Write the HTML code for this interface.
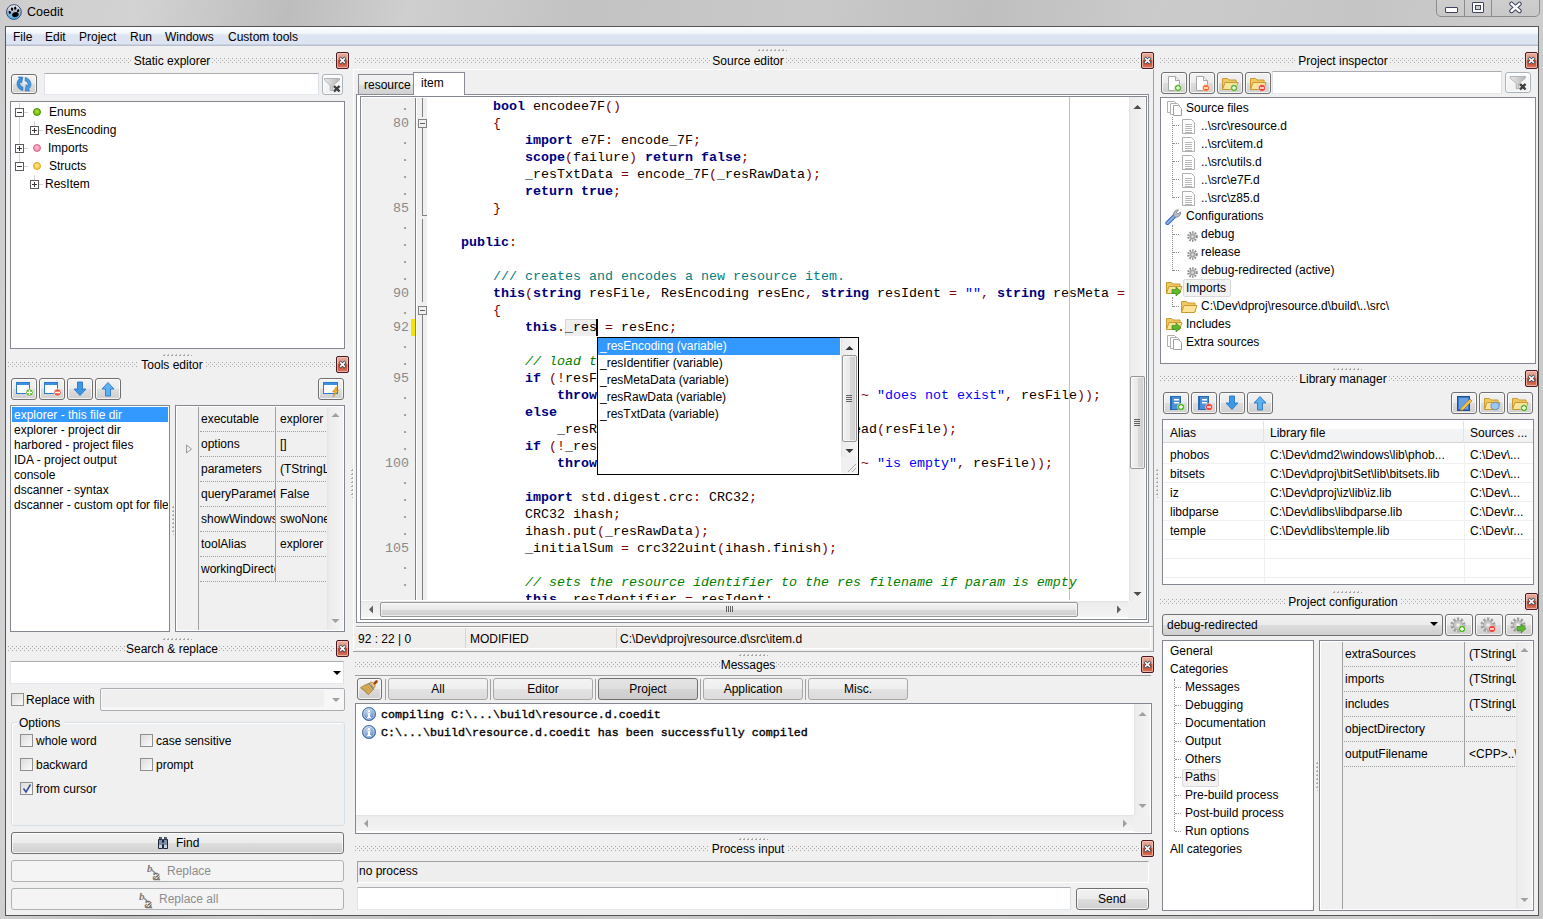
<!DOCTYPE html><html><head><meta charset="utf-8"><style>
*{box-sizing:content-box;margin:0;padding:0}
html,body{width:1543px;height:919px;overflow:hidden}
body{position:relative;background:#c9c9c9;font-family:"Liberation Sans",sans-serif;font-size:12px;color:#000}
div{position:absolute}
.t{white-space:pre;line-height:14px;font-size:12px}
.cb{width:11px;height:15px;border:1px solid #4a1820;border-radius:2px;background:linear-gradient(#e6a898 0,#e09a88 45%,#c8482e 46%,#cc5a40 75%,#d47c68 100%);box-shadow:inset 0 0 0 1px rgba(255,210,200,.6)}
.btn{border:1px solid #707070;border-radius:3px;background:linear-gradient(#f2f2f2 0,#ebebeb 50%,#dddddd 51%,#cfcfcf 100%);box-shadow:inset 0 0 0 1px rgba(255,255,255,.75)}
.dbtn{border:1px solid #adb2b5;border-radius:3px;background:#f4f4f4}
.edit{background:#fff;border:1px solid #abadb3;border-left-color:#e2e3ea;border-right-color:#dbdfe6;border-bottom-color:#e3e9ef}
.wbox{background:#fff;border:1px solid #828790}
.code{white-space:pre;font-family:"Liberation Mono",monospace;font-size:13.333px;line-height:17px}
.k{color:#000080;font-weight:bold}
.s{color:#800000}
.q{color:#0000ff}
.dc{color:#008080}
.cm{color:#008000;font-style:italic}
</style></head><body>
<svg width="0" height="0" style="position:absolute"><defs>
<pattern id="dotp" width="4" height="4" patternUnits="userSpaceOnUse"><rect x="0" y="0" width="1" height="1" fill="#a8a8a8"/><rect x="2" y="2" width="1" height="1" fill="#a8a8a8"/></pattern>
<pattern id="gripv" width="2" height="4" patternUnits="userSpaceOnUse"><rect x="1" y="0" width="1" height="1" fill="#b4b4b4"/><rect x="0" y="1" width="2" height="1" fill="#a8a8a8"/></pattern>
<pattern id="gripp" width="4" height="2" patternUnits="userSpaceOnUse"><rect x="1" y="0" width="1" height="1" fill="#b4b4b4"/><rect x="0" y="1" width="2" height="1" fill="#a8a8a8"/></pattern>
</defs></svg>

<div style="left:0px;top:0px;width:1543px;height:919px;background:linear-gradient(100deg,#cdcdcd 0,#d3d3d3 8%,#bdbdbd 17%,#cfcfcf 24%,#c3c3c3 34%,#c9c9c9 48%,#bfbfbf 58%,#cbcbcb 68%,#c5c5c5 80%,#cdcdcd 90%,#c6c6c6 100%)"></div>
<div style="left:0px;top:0px;width:1543px;height:919px;background:transparent;border:0"></div>
<svg style="position:absolute;left:5px;top:3px" width="18" height="18"><defs><linearGradient id="pawg" x1="0" y1="0" x2="0" y2="1"><stop offset="0" stop-color="#f4f4f8"/><stop offset=".5" stop-color="#a8b4c8"/><stop offset="1" stop-color="#3ab4f4"/></linearGradient></defs><circle cx="8.9" cy="9" r="7.4" fill="url(#pawg)" stroke="#34507a" stroke-width="1"/><ellipse cx="10.4" cy="11.6" rx="3.3" ry="2.4" transform="rotate(-15 10.4 11.6)" fill="#000"/><ellipse cx="4.8" cy="9.4" rx="1.1" ry="1.5" transform="rotate(-30 4.8 9.4)" fill="#000"/><ellipse cx="7.1" cy="6.1" rx="1.1" ry="1.6" transform="rotate(-15 7.1 6.1)" fill="#000"/><ellipse cx="10.2" cy="5.2" rx="1.1" ry="1.6" fill="#000"/><ellipse cx="13.1" cy="7.6" rx="1.1" ry="1.5" transform="rotate(30 13.1 7.6)" fill="#000"/></svg>
<div class="t" style="left:27px;top:5px;font-size:12.5px">Coedit</div>
<div style="left:1436px;top:-3px;width:102px;height:18px;border:1px solid #8c8c8c;border-radius:0 0 5px 5px;background:linear-gradient(#cfcfcf,#c8c8c8)"></div>
<div style="left:1464px;top:0px;width:1px;height:16px;background:#8c8c8c"></div>
<div style="left:1491px;top:0px;width:1px;height:16px;background:#8c8c8c"></div>
<div style="left:1445px;top:7px;width:11px;height:4px;border:1px solid #3c4460;border-radius:1px;background:#fff"></div>
<div style="left:1472px;top:2px;width:10px;height:9px;border:1px solid #3c4460;border-radius:1px;background:#fff"></div>
<div style="left:1475px;top:5px;width:4px;height:3px;border:1px solid #3c4460;background:#cfcfcf"></div>
<svg style="position:absolute;left:1508px;top:1px" width="15" height="13"><path d="M3.5 2.8 L11.5 10 M11.5 2.8 L3.5 10" stroke="#3c4460" stroke-width="4.4" stroke-linecap="round"/><path d="M3.5 2.8 L11.5 10 M11.5 2.8 L3.5 10" stroke="#fff" stroke-width="2.4" stroke-linecap="round"/></svg>
<div style="left:5px;top:26px;width:1532px;height:888px;border:1px solid #555;background:#f0f0f0"></div>
<div style="left:6px;top:27px;width:1532px;height:19px;background:linear-gradient(#fcfdfe 0,#f3f6fb 6px,#dde4f2 8px,#dce3f1 17px,#b8c0d0 18px,#b8c0d0 100%)"></div>
<div class="t" style="left:13px;top:30px;">File</div>
<div class="t" style="left:45px;top:30px;">Edit</div>
<div class="t" style="left:79px;top:30px;">Project</div>
<div class="t" style="left:130px;top:30px;">Run</div>
<div class="t" style="left:165px;top:30px;">Windows</div>
<div class="t" style="left:228px;top:30px;">Custom tools</div>
<svg style="position:absolute;left:8px;top:58px" width="124" height="5"><rect width="100%" height="5" fill="url(#dotp)"/></svg><svg style="position:absolute;left:212px;top:58px" width="123" height="5"><rect width="100%" height="5" fill="url(#dotp)"/></svg><div class="t" style="left:-28px;width:400px;text-align:center;top:54px;">Static explorer</div><div class="cb" style="left:336px;top:52px"><svg width="13" height="17" style="position:absolute;left:0;top:0"><path d="M2.6 4.6 L8.4 10.4 M8.4 4.6 L2.6 10.4" stroke="#3a4656" stroke-width="2.9" stroke-linecap="butt"/><path d="M3.1 5.1 L7.9 9.9 M7.9 5.1 L3.1 9.9" stroke="#fff" stroke-width="1.5" stroke-linecap="butt"/></svg></div>
<div class="btn" style="left:11px;top:74px;width:24px;height:18px;"><svg width="20" height="18" style="position:absolute;left:2px;top:0px"><g transform="translate(10 9) scale(1.15) translate(-10 -9)"><path d="M9 3 L5 3 L6.2 4.4 C3.6 6 3.2 10 5.4 12.6 C6.4 13.8 7.6 14.4 9 14.6 L9 11.6 C7 11.2 5.8 9 6.8 7 L8 8.3 L9 3Z" fill="#3d8fd8" stroke="#2a73b8" stroke-width=".6"/><path d="M11 15 L15 15 L13.8 13.6 C16.4 12 16.8 8 14.6 5.4 C13.6 4.2 12.4 3.6 11 3.4 L11 6.4 C13 6.8 14.2 9 13.2 11 L12 9.7 L11 15Z" fill="#4a9be0" stroke="#2a73b8" stroke-width=".6"/></g></svg></div>
<div class="edit" style="left:44px;top:73px;width:273px;height:20px;"></div>
<div class="btn" style="left:322px;top:74px;width:19px;height:19px;border-color:#aab2ba;background:linear-gradient(#fbfbfb,#f0f0f0)"><svg width="19" height="19" style="position:absolute;left:0;top:0"><defs><linearGradient id="fung" x1="0" x2="1"><stop offset="0" stop-color="#e8e8e8"/><stop offset="1" stop-color="#b8b8b8"/></linearGradient></defs><path d="M1.5 3.5 L16.5 3.5 L16.5 5 L9.8 10.5 L9.8 15.5 L7.2 15.5 L7.2 10.5 L1.5 5Z" fill="url(#fung)" stroke="#a8a8a8" stroke-width=".8"/><path d="M11 11 L16.5 16.5 M16.5 11 L11 16.5" stroke="#333" stroke-width="2.4"/><path d="M11 11 L16.5 16.5 M16.5 11 L11 16.5" stroke="#777" stroke-width=".6" stroke-dasharray="1 1"/></svg></div>
<div class="wbox" style="left:10px;top:101px;width:333px;height:246px;"></div>
<div style="left:19px;top:103px;width:1px;height:60px;background:#d4d4d4"></div>
<div style="left:24px;top:112px;width:4px;height:1px;background:#d4d4d4"></div>
<div style="left:15px;top:108px;width:7px;height:7px;border:1px solid #5c5c5c;background:#fff"><div style="left:1px;top:3px;width:5px;height:1px;background:#3c3c3c"></div></div>
<div style="left:33px;top:108px;width:6px;height:6px;border-radius:50%;border:1px solid #3a8a00;background:radial-gradient(circle at 50% 40%,#a8e040 0,#80c000 70%)"></div>
<div style="left:24px;top:148px;width:4px;height:1px;background:#d4d4d4"></div>
<div style="left:15px;top:144px;width:7px;height:7px;border:1px solid #5c5c5c;background:#fff"><div style="left:1px;top:3px;width:5px;height:1px;background:#3c3c3c"></div><div style="left:3px;top:1px;width:1px;height:5px;background:#3c3c3c"></div></div>
<div style="left:33px;top:144px;width:6px;height:6px;border-radius:50%;border:1px solid #d86088;background:radial-gradient(circle at 50% 40%,#ffc0d8 0,#f490b0 70%)"></div>
<div style="left:24px;top:166px;width:4px;height:1px;background:#d4d4d4"></div>
<div style="left:15px;top:162px;width:7px;height:7px;border:1px solid #5c5c5c;background:#fff"><div style="left:1px;top:3px;width:5px;height:1px;background:#3c3c3c"></div></div>
<div style="left:33px;top:162px;width:6px;height:6px;border-radius:50%;border:1px solid #e0a020;background:radial-gradient(circle at 50% 40%,#ffe890 0,#ffc840 70%)"></div>
<div style="left:34px;top:121px;width:1px;height:10px;background:#d4d4d4"></div>
<div style="left:34px;top:175px;width:1px;height:10px;background:#d4d4d4"></div>
<div style="left:30px;top:126px;width:7px;height:7px;border:1px solid #5c5c5c;background:#fff"><div style="left:1px;top:3px;width:5px;height:1px;background:#3c3c3c"></div><div style="left:3px;top:1px;width:1px;height:5px;background:#3c3c3c"></div></div>
<div style="left:39px;top:130px;width:4px;height:1px;background:#d4d4d4"></div>
<div style="left:30px;top:180px;width:7px;height:7px;border:1px solid #5c5c5c;background:#fff"><div style="left:1px;top:3px;width:5px;height:1px;background:#3c3c3c"></div><div style="left:3px;top:1px;width:1px;height:5px;background:#3c3c3c"></div></div>
<div style="left:39px;top:184px;width:4px;height:1px;background:#d4d4d4"></div>
<div class="t" style="left:49px;top:105px;">Enums</div>
<div class="t" style="left:45px;top:123px;">ResEncoding</div>
<div class="t" style="left:48px;top:141px;">Imports</div>
<div class="t" style="left:49px;top:159px;">Structs</div>
<div class="t" style="left:45px;top:177px;">ResItem</div>
<svg style="position:absolute;left:351px;top:469px" width="2" height="29"><rect width="2" height="100%" fill="url(#gripv)"/></svg>
<svg style="position:absolute;left:1156px;top:469px" width="2" height="29"><rect width="2" height="100%" fill="url(#gripv)"/></svg>
<svg style="position:absolute;left:172px;top:506px" width="2" height="29"><rect width="2" height="100%" fill="url(#gripv)"/></svg>
<svg style="position:absolute;left:1316px;top:762px" width="2" height="29"><rect width="2" height="100%" fill="url(#gripv)"/></svg>
<svg style="position:absolute;left:163px;top:354px" width="29" height="2"><rect width="100%" height="2" fill="url(#gripp)"/></svg>
<svg style="position:absolute;left:8px;top:362px" width="130" height="5"><rect width="100%" height="5" fill="url(#dotp)"/></svg><svg style="position:absolute;left:206px;top:362px" width="129" height="5"><rect width="100%" height="5" fill="url(#dotp)"/></svg><div class="t" style="left:-28px;width:400px;text-align:center;top:358px;">Tools editor</div><div class="cb" style="left:336px;top:356px"><svg width="13" height="17" style="position:absolute;left:0;top:0"><path d="M2.6 4.6 L8.4 10.4 M8.4 4.6 L2.6 10.4" stroke="#3a4656" stroke-width="2.9" stroke-linecap="butt"/><path d="M3.1 5.1 L7.9 9.9 M7.9 5.1 L3.1 9.9" stroke="#fff" stroke-width="1.5" stroke-linecap="butt"/></svg></div>
<div class="btn" style="left:11px;top:378px;width:24px;height:20px;"><svg width="22" height="20" style="position:absolute;left:1px;top:0"><rect x="3.5" y="3.5" width="13" height="11" fill="#fff" stroke="#2b7bd0"/><rect x="4" y="4" width="12" height="2" fill="#3d8fe0"/><circle cx="16.5" cy="13.5" r="3.6" fill="#4caf1c" stroke="#fff" stroke-width=".6"/><path d="M14 13.5 h5 M16.5 11 v5" stroke="#fff" stroke-width="1.5"/></svg></div>
<div class="btn" style="left:39px;top:378px;width:24px;height:20px;"><svg width="22" height="20" style="position:absolute;left:1px;top:0"><rect x="3.5" y="3.5" width="13" height="11" fill="#fff" stroke="#2b7bd0"/><rect x="4" y="4" width="12" height="2" fill="#3d8fe0"/><circle cx="16.5" cy="13.5" r="3.6" fill="#e8503a" stroke="#fff" stroke-width=".6"/><path d="M14 13.5 h5" stroke="#fff" stroke-width="1.6"/></svg></div>
<div class="btn" style="left:67px;top:378px;width:24px;height:20px;"><svg width="22" height="20" style="position:absolute;left:1px;top:0"><path d="M8.5 3 h5 v7 h3.5 L11 16.5 L5 10 h3.5Z" fill="#3a98e6" stroke="#1f6fc0" stroke-width=".8"/></svg></div>
<div class="btn" style="left:95px;top:378px;width:24px;height:20px;"><svg width="22" height="20" style="position:absolute;left:1px;top:0"><path d="M8.5 17 h5 v-7 h3.5 L11 3.5 L5 10 h3.5Z" fill="#5ab0f0" stroke="#1f6fc0" stroke-width=".8"/></svg></div>
<div class="btn" style="left:318px;top:378px;width:24px;height:20px;"><svg width="22" height="20" style="position:absolute;left:1px;top:0"><rect x="3.5" y="3.5" width="14" height="11" fill="#fff" stroke="#2b7bd0"/><rect x="4" y="4" width="13" height="2" fill="#3d8fe0"/><path d="M16 8 L12.5 13 L15 13 L13 18 L18.5 11.5 L16 11.5 L18 8Z" fill="#f0b428" stroke="#c07a10" stroke-width=".5"/></svg></div>
<div class="wbox" style="left:10px;top:405px;width:158px;height:225px;"></div>
<div style="left:12px;top:407px;width:156px;height:15px;background:#3399ff"></div>
<div style="left:11px;top:407px;width:157px;height:15px;overflow:hidden"><div class="t" style="left:3px;top:1px;color:#fff;">explorer - this file dir</div></div>
<div style="left:11px;top:407px;width:157px;height:30px;overflow:hidden"><div class="t" style="left:3px;top:16px;">explorer - project dir</div></div>
<div style="left:11px;top:407px;width:157px;height:45px;overflow:hidden"><div class="t" style="left:3px;top:31px;">harbored - project files</div></div>
<div style="left:11px;top:407px;width:157px;height:60px;overflow:hidden"><div class="t" style="left:3px;top:46px;">IDA - project output</div></div>
<div style="left:11px;top:407px;width:157px;height:75px;overflow:hidden"><div class="t" style="left:3px;top:61px;">console</div></div>
<div style="left:11px;top:407px;width:157px;height:90px;overflow:hidden"><div class="t" style="left:3px;top:76px;">dscanner - syntax</div></div>
<div style="left:11px;top:407px;width:157px;height:105px;overflow:hidden"><div class="t" style="left:3px;top:91px;">dscanner - custom opt for file</div></div>
<div style="left:175px;top:405px;width:168px;height:225px;background:#f0f0f0;border:1px solid #828790;box-shadow:inset 0 0 0 1px #fff"></div><div style="left:198px;top:407px;width:1px;height:223px;background:#a0a0a0"></div><div style="left:199px;top:407px;width:76px;height:25px;overflow:hidden"><div class="t" style="left:2px;top:5px">executable</div></div><div style="left:276px;top:407px;width:51px;height:25px;overflow:hidden"><div class="t" style="left:4px;top:5px">explorer</div></div><div style="left:200px;top:431px;width:126px;height:1px;border-top:1px dotted #a0a0a0;height:0"></div><div style="left:199px;top:432px;width:76px;height:25px;overflow:hidden"><div class="t" style="left:2px;top:5px">options</div></div><div style="left:276px;top:432px;width:51px;height:25px;overflow:hidden"><div class="t" style="left:4px;top:5px">[]</div></div><div style="left:200px;top:456px;width:126px;height:1px;border-top:1px dotted #a0a0a0;height:0"></div><div style="left:199px;top:457px;width:76px;height:25px;overflow:hidden"><div class="t" style="left:2px;top:5px">parameters</div></div><div style="left:276px;top:457px;width:51px;height:25px;overflow:hidden"><div class="t" style="left:4px;top:5px">(TStringList)</div></div><div style="left:200px;top:481px;width:126px;height:1px;border-top:1px dotted #a0a0a0;height:0"></div><div style="left:199px;top:482px;width:76px;height:25px;overflow:hidden"><div class="t" style="left:2px;top:5px">queryParameters</div></div><div style="left:276px;top:482px;width:51px;height:25px;overflow:hidden"><div class="t" style="left:4px;top:5px">False</div></div><div style="left:200px;top:506px;width:126px;height:1px;border-top:1px dotted #a0a0a0;height:0"></div><div style="left:199px;top:507px;width:76px;height:25px;overflow:hidden"><div class="t" style="left:2px;top:5px">showWindows</div></div><div style="left:276px;top:507px;width:51px;height:25px;overflow:hidden"><div class="t" style="left:4px;top:5px">swoNone</div></div><div style="left:200px;top:531px;width:126px;height:1px;border-top:1px dotted #a0a0a0;height:0"></div><div style="left:199px;top:532px;width:76px;height:25px;overflow:hidden"><div class="t" style="left:2px;top:5px">toolAlias</div></div><div style="left:276px;top:532px;width:51px;height:25px;overflow:hidden"><div class="t" style="left:4px;top:5px">explorer - this file dir</div></div><div style="left:200px;top:556px;width:126px;height:1px;border-top:1px dotted #a0a0a0;height:0"></div><div style="left:199px;top:557px;width:76px;height:25px;overflow:hidden"><div class="t" style="left:2px;top:5px">workingDirectory</div></div><div style="left:276px;top:557px;width:51px;height:25px;overflow:hidden"><div class="t" style="left:4px;top:5px"></div></div><div style="left:200px;top:581px;width:126px;height:1px;border-top:1px dotted #a0a0a0;height:0"></div><div style="left:275px;top:407px;width:1px;height:175px;background:#a0a0a0"></div><div style="left:327px;top:407px;width:16px;height:223px;background:linear-gradient(90deg,#e3e3e3 0,#ececec 2px,#f0f0f0 60%,#f4f4f4 100%)"></div><svg style="position:absolute;left:331px;top:412px" width="9" height="6"><path d="M0.5 5 L4.5 1 L8.5 5Z" fill="#a0a0a0"/></svg><svg style="position:absolute;left:331px;top:618px" width="9" height="6"><path d="M0.5 1 L4.5 5 L8.5 1Z" fill="#a0a0a0"/></svg><svg style="position:absolute;left:185px;top:444px" width="8" height="10"><path d="M1.5 1 L6.5 5 L1.5 9Z" fill="none" stroke="#9a9a9a"/></svg>
<svg style="position:absolute;left:163px;top:638px" width="29" height="2"><rect width="100%" height="2" fill="url(#gripp)"/></svg>
<svg style="position:absolute;left:8px;top:646px" width="117" height="5"><rect width="100%" height="5" fill="url(#dotp)"/></svg><svg style="position:absolute;left:219px;top:646px" width="116" height="5"><rect width="100%" height="5" fill="url(#dotp)"/></svg><div class="t" style="left:-28px;width:400px;text-align:center;top:642px;">Search &amp; replace</div><div class="cb" style="left:336px;top:640px"><svg width="13" height="17" style="position:absolute;left:0;top:0"><path d="M2.6 4.6 L8.4 10.4 M8.4 4.6 L2.6 10.4" stroke="#3a4656" stroke-width="2.9" stroke-linecap="butt"/><path d="M3.1 5.1 L7.9 9.9 M7.9 5.1 L3.1 9.9" stroke="#fff" stroke-width="1.5" stroke-linecap="butt"/></svg></div>
<div class="edit" style="left:10px;top:661px;width:332px;height:21px;"></div>
<svg style="position:absolute;left:333px;top:671px" width="9" height="5"><path d="M0 0 L8 0 L4 4Z" fill="#000"/></svg>
<div style="left:11px;top:693px;width:11px;height:11px;border:1px solid #8f8f8f;background:linear-gradient(135deg,#dcdcdc,#fafafa)"></div>
<div class="t" style="left:26px;top:693px;">Replace with</div>
<div style="left:100px;top:688px;width:243px;height:21px;background:#f7f7f7;border:1px solid #abadb3;border-radius:2px"></div>
<div style="left:102px;top:690px;width:222px;height:17px;background:#efefef"></div>
<svg style="position:absolute;left:332px;top:698px" width="9" height="5"><path d="M0 0 L8 0 L4 4Z" fill="#a0a0a0"/></svg>
<div style="left:11px;top:722px;width:332px;height:102px;border:1px solid #d5dfe5;border-radius:3px;box-shadow:inset 1px 1px 0 #fff"></div>
<div style="left:17px;top:718px;width:47px;height:12px;background:#f0f0f0"></div>
<div class="t" style="left:19px;top:716px;">Options</div>
<div style="left:20px;top:734px;width:11px;height:11px;border:1px solid #8f8f8f;background:linear-gradient(135deg,#dcdcdc,#fafafa)"></div>
<div class="t" style="left:36px;top:734px;">whole word</div>
<div style="left:140px;top:734px;width:11px;height:11px;border:1px solid #8f8f8f;background:linear-gradient(135deg,#dcdcdc,#fafafa)"></div>
<div class="t" style="left:156px;top:734px;">case sensitive</div>
<div style="left:20px;top:758px;width:11px;height:11px;border:1px solid #8f8f8f;background:linear-gradient(135deg,#dcdcdc,#fafafa)"></div>
<div class="t" style="left:36px;top:758px;">backward</div>
<div style="left:140px;top:758px;width:11px;height:11px;border:1px solid #8f8f8f;background:linear-gradient(135deg,#dcdcdc,#fafafa)"></div>
<div class="t" style="left:156px;top:758px;">prompt</div>
<div style="left:20px;top:782px;width:11px;height:11px;border:1px solid #8f8f8f;background:linear-gradient(135deg,#dcdcdc,#fafafa)"></div><svg style="position:absolute;left:22px;top:783px" width="10" height="11"><path d="M1.5 5.5 L4 9 L8.5 1.5" fill="none" stroke="#3850a0" stroke-width="1.6"/></svg>
<div class="t" style="left:36px;top:782px;">from cursor</div>
<div class="btn" style="left:11px;top:832px;width:331px;height:20px;"><svg width="16" height="16" style="position:absolute;left:144px;top:3px"><path d="M2.5 3.5 h4 v3 h1 v-3 h4 v9 h-4 v-4 h-1 v4 h-4Z" fill="#7d8ea8" stroke="#1e2838" stroke-width="1"/><rect x="3" y="9" width="3" height="3" fill="#c8d4e4"/><rect x="8" y="9" width="3" height="3" fill="#c8d4e4"/><rect x="3.5" y="1.5" width="2" height="2" fill="#5a6a88" stroke="#1e2838" stroke-width=".6"/><rect x="8.5" y="1.5" width="2" height="2" fill="#5a6a88" stroke="#1e2838" stroke-width=".6"/></svg></div>
<div class="t" style="left:176px;top:836px;">Find</div>
<div class="dbtn" style="left:11px;top:860px;width:331px;height:20px;"></div>
<div class="t" style="left:167px;top:864px;color:#8d8d8d">Replace</div>
<div class="dbtn" style="left:11px;top:888px;width:331px;height:20px;"></div>
<div class="t" style="left:159px;top:892px;color:#8d8d8d">Replace all</div>
<svg style="position:absolute;left:147px;top:863px" width="18" height="18"><text x="0" y="9" font-family="Liberation Serif" font-style="italic" font-weight="bold" font-size="11" fill="#7a7a7a">b</text><path d="M5 7 L9 11" stroke="#8a8a8a" stroke-width="1.4"/><text x="5.5" y="16.5" font-family="Liberation Serif" font-weight="bold" font-size="15" fill="#8a8a8a" stroke="#666" stroke-width=".5">a</text><path d="M7 15 L13 9 M9 16 L14 11" stroke="#f4f4f4" stroke-width=".6"/></svg>
<svg style="position:absolute;left:139px;top:891px" width="18" height="18"><text x="0" y="9" font-family="Liberation Serif" font-style="italic" font-weight="bold" font-size="11" fill="#7a7a7a">b</text><path d="M5 7 L9 11" stroke="#8a8a8a" stroke-width="1.4"/><text x="5.5" y="16.5" font-family="Liberation Serif" font-weight="bold" font-size="15" fill="#8a8a8a" stroke="#666" stroke-width=".5">a</text><path d="M7 15 L13 9 M9 16 L14 11" stroke="#f4f4f4" stroke-width=".6"/></svg>
<svg style="position:absolute;left:758px;top:49px" width="29" height="2"><rect width="100%" height="2" fill="url(#gripp)"/></svg>
<svg style="position:absolute;left:355px;top:58px" width="355" height="5"><rect width="100%" height="5" fill="url(#dotp)"/></svg><svg style="position:absolute;left:786px;top:58px" width="354" height="5"><rect width="100%" height="5" fill="url(#dotp)"/></svg><div class="t" style="left:548px;width:400px;text-align:center;top:54px;">Source editor</div><div class="cb" style="left:1141px;top:52px"><svg width="13" height="17" style="position:absolute;left:0;top:0"><path d="M2.6 4.6 L8.4 10.4 M8.4 4.6 L2.6 10.4" stroke="#3a4656" stroke-width="2.9" stroke-linecap="butt"/><path d="M3.1 5.1 L7.9 9.9 M7.9 5.1 L3.1 9.9" stroke="#fff" stroke-width="1.5" stroke-linecap="butt"/></svg></div>
<div style="left:353px;top:69px;width:800px;height:582px;border-left:1px solid #fff;border-top:1px solid #fff;border-right:1px solid #a0a0a0;border-bottom:1px solid #a0a0a0;width:799px;height:581px"></div>
<div style="left:358px;top:74px;width:55px;height:20px;border:1px solid #898c95;border-bottom:0;background:linear-gradient(#f2f2f2 0,#ebebeb 50%,#dddddd 51%,#cfcfcf 100%)"></div>
<div class="t" style="left:364px;top:78px;">resource</div>
<div style="left:413px;top:72px;width:50px;height:23px;border:1px solid #898c95;border-bottom:0;background:#fff"></div>
<div class="t" style="left:421px;top:76px;">item</div>
<div style="left:356px;top:94px;width:791px;height:527px;border:1px solid #898c95;background:#fff"></div>
<div style="left:414px;top:94px;width:50px;height:1px;background:#fff"></div>
<div style="left:360px;top:96px;width:785px;height:522px;border:1px solid #828790;background:#fff"></div>
<div style="left:362px;top:98px;width:53px;height:502px;background:#f0f0f0"></div>
<div style="left:415px;top:98px;width:1px;height:502px;background:#808080"></div>
<div style="left:417px;top:98px;width:10px;height:502px;background:#f0f0f0"></div>
<div style="left:1069px;top:97px;width:1px;height:503px;background:#c0c0c0"></div>
<div style="left:361px;top:98px;width:768px;height:502px;overflow:hidden"><div class="code" style="left:68px;top:0px;height:17px">        <span class="k">bool</span> encodee7F<span class="s">(</span><span class="s">)</span></div><div class="code" style="left:0px;top:0px;width:48px;text-align:right;color:#8a8a8a">.</div><div class="code" style="left:68px;top:17px;height:17px">        <span class="s">{</span></div><div class="code" style="left:0px;top:17px;width:48px;text-align:right;color:#8a8a8a">80</div><div class="code" style="left:68px;top:34px;height:17px">            <span class="k">import</span> e7F<span class="s">:</span> encode_7F<span class="s">;</span></div><div class="code" style="left:0px;top:34px;width:48px;text-align:right;color:#8a8a8a">.</div><div class="code" style="left:68px;top:51px;height:17px">            <span class="k">scope</span><span class="s">(</span>failure<span class="s">)</span> <span class="k">return</span> <span class="k">false</span><span class="s">;</span></div><div class="code" style="left:0px;top:51px;width:48px;text-align:right;color:#8a8a8a">.</div><div class="code" style="left:68px;top:68px;height:17px">            _resTxtData <span class="s">=</span> encode_7F<span class="s">(</span>_resRawData<span class="s">)</span><span class="s">;</span></div><div class="code" style="left:0px;top:68px;width:48px;text-align:right;color:#8a8a8a">.</div><div class="code" style="left:68px;top:85px;height:17px">            <span class="k">return</span> <span class="k">true</span><span class="s">;</span></div><div class="code" style="left:0px;top:85px;width:48px;text-align:right;color:#8a8a8a">.</div><div class="code" style="left:68px;top:102px;height:17px">        <span class="s">}</span></div><div class="code" style="left:0px;top:102px;width:48px;text-align:right;color:#8a8a8a">85</div><div class="code" style="left:68px;top:119px;height:17px"></div><div class="code" style="left:0px;top:119px;width:48px;text-align:right;color:#8a8a8a">.</div><div class="code" style="left:68px;top:136px;height:17px">    <span class="k">public</span><span class="s">:</span></div><div class="code" style="left:0px;top:136px;width:48px;text-align:right;color:#8a8a8a">.</div><div class="code" style="left:68px;top:153px;height:17px"></div><div class="code" style="left:0px;top:153px;width:48px;text-align:right;color:#8a8a8a">.</div><div class="code" style="left:68px;top:170px;height:17px">        <span class="dc">/// creates and encodes a new resource item.</span></div><div class="code" style="left:0px;top:170px;width:48px;text-align:right;color:#8a8a8a">.</div><div class="code" style="left:68px;top:187px;height:17px">        <span class="k">this</span><span class="s">(</span><span class="k">string</span> resFile<span class="s">,</span> ResEncoding resEnc<span class="s">,</span> <span class="k">string</span> resIdent <span class="s">=</span> <span class="q">&quot;&quot;</span><span class="s">,</span> <span class="k">string</span> resMeta <span class="s">=</span></div><div class="code" style="left:0px;top:187px;width:48px;text-align:right;color:#8a8a8a">90</div><div class="code" style="left:68px;top:204px;height:17px">        <span class="s">{</span></div><div class="code" style="left:0px;top:204px;width:48px;text-align:right;color:#8a8a8a">.</div><div class="code" style="left:68px;top:221px;height:17px">            <span class="k">this</span><span class="s">.</span>_res <span class="s">=</span> resEnc<span class="s">;</span></div><div class="code" style="left:0px;top:221px;width:48px;text-align:right;color:#8a8a8a">92</div><div class="code" style="left:68px;top:238px;height:17px"></div><div class="code" style="left:0px;top:238px;width:48px;text-align:right;color:#8a8a8a">.</div><div class="code" style="left:68px;top:255px;height:17px">            <span class="cm">// load the resource file</span></div><div class="code" style="left:0px;top:255px;width:48px;text-align:right;color:#8a8a8a">.</div><div class="code" style="left:68px;top:272px;height:17px">            <span class="k">if</span> <span class="s">(</span><span class="s">!</span>resFile<span class="s">.</span>exists<span class="s">)</span></div><div class="code" style="left:0px;top:272px;width:48px;text-align:right;color:#8a8a8a">95</div><div class="code" style="left:68px;top:289px;height:17px">                <span class="k">throw</span> <span class="k">new</span> Exception<span class="s">(</span>                  <span class="s">~</span> <span class="q">&quot;does not exist&quot;</span><span class="s">,</span> resFile<span class="s">)</span><span class="s">)</span><span class="s">;</span></div><div class="code" style="left:0px;top:289px;width:48px;text-align:right;color:#8a8a8a">.</div><div class="code" style="left:68px;top:306px;height:17px">            <span class="k">else</span></div><div class="code" style="left:0px;top:306px;width:48px;text-align:right;color:#8a8a8a">.</div><div class="code" style="left:68px;top:323px;height:17px">                _resRawData <span class="s">=</span> cast<span class="s">(</span>ubyte<span class="s">[</span><span class="s">]</span><span class="s">)</span>r        read<span class="s">(</span>resFile<span class="s">)</span><span class="s">;</span></div><div class="code" style="left:0px;top:323px;width:48px;text-align:right;color:#8a8a8a">.</div><div class="code" style="left:68px;top:340px;height:17px">            <span class="k">if</span> <span class="s">(</span><span class="s">!</span>_resRawData<span class="s">.</span>length<span class="s">)</span></div><div class="code" style="left:0px;top:340px;width:48px;text-align:right;color:#8a8a8a">.</div><div class="code" style="left:68px;top:357px;height:17px">                <span class="k">throw</span> <span class="k">new</span> Exception<span class="s">(</span>                  <span class="s">~</span> <span class="q">&quot;is empty&quot;</span><span class="s">,</span> resFile<span class="s">)</span><span class="s">)</span><span class="s">;</span></div><div class="code" style="left:0px;top:357px;width:48px;text-align:right;color:#8a8a8a">100</div><div class="code" style="left:68px;top:374px;height:17px"></div><div class="code" style="left:0px;top:374px;width:48px;text-align:right;color:#8a8a8a">.</div><div class="code" style="left:68px;top:391px;height:17px">            <span class="k">import</span> std<span class="s">.</span>digest<span class="s">.</span>crc<span class="s">:</span> CRC32<span class="s">;</span></div><div class="code" style="left:0px;top:391px;width:48px;text-align:right;color:#8a8a8a">.</div><div class="code" style="left:68px;top:408px;height:17px">            CRC32 ihash<span class="s">;</span></div><div class="code" style="left:0px;top:408px;width:48px;text-align:right;color:#8a8a8a">.</div><div class="code" style="left:68px;top:425px;height:17px">            ihash<span class="s">.</span>put<span class="s">(</span>_resRawData<span class="s">)</span><span class="s">;</span></div><div class="code" style="left:0px;top:425px;width:48px;text-align:right;color:#8a8a8a">.</div><div class="code" style="left:68px;top:442px;height:17px">            _initialSum <span class="s">=</span> crc322uint<span class="s">(</span>ihash<span class="s">.</span>finish<span class="s">)</span><span class="s">;</span></div><div class="code" style="left:0px;top:442px;width:48px;text-align:right;color:#8a8a8a">105</div><div class="code" style="left:68px;top:459px;height:17px"></div><div class="code" style="left:0px;top:459px;width:48px;text-align:right;color:#8a8a8a">.</div><div class="code" style="left:68px;top:476px;height:17px">            <span class="cm">// sets the resource identifier to the res filename if param is empty</span></div><div class="code" style="left:0px;top:476px;width:48px;text-align:right;color:#8a8a8a">.</div><div class="code" style="left:68px;top:493px;height:17px">            <span class="k">this</span><span class="s">.</span>_resIdentifier <span class="s">=</span> resIdent<span class="s">;</span></div><div class="code" style="left:0px;top:493px;width:48px;text-align:right;color:#8a8a8a">.</div></div>
<div style="left:422px;top:98px;width:1px;height:19px;background:#808080"></div>
<div style="left:418px;top:119px;width:7px;height:7px;border:1px solid #808080;background:#f0f0f0"></div><div style="left:420px;top:123px;width:5px;height:1px;background:#606060"></div>
<div style="left:422px;top:128px;width:1px;height:88px;background:#808080"></div>
<div style="left:422px;top:215px;width:5px;height:1px;background:#808080"></div>
<div style="left:422px;top:219px;width:1px;height:83px;background:#808080"></div>
<div style="left:418px;top:306px;width:7px;height:7px;border:1px solid #808080;background:#f0f0f0"></div><div style="left:420px;top:310px;width:5px;height:1px;background:#606060"></div>
<div style="left:422px;top:315px;width:1px;height:285px;background:#808080"></div>
<div style="left:411px;top:319px;width:4px;height:17px;background:#f5e600"></div>
<div style="left:565px;top:319px;width:31px;height:16px;background:#eeeeee;border:1px solid #d8d8d8;border-bottom:0;width:30px"></div>
<div class="code" style="left:565px;top:319px;height:17px"><span style="color:#000">_res</span></div>
<div style="left:596px;top:319px;width:2px;height:17px;background:#000"></div>
<div style="left:1129px;top:97px;width:16px;height:506px;background:linear-gradient(90deg,#e3e3e3 0,#ededed 2px,#f0f0f0 60%,#f4f4f4 100%)"></div><svg style="position:absolute;left:1133px;top:104px" width="9" height="6"><path d="M0.5 5 L4.5 1 L8.5 5Z" fill="#4a4a4a"/></svg><svg style="position:absolute;left:1133px;top:591px" width="9" height="6"><path d="M0.5 1 L4.5 5 L8.5 1Z" fill="#4a4a4a"/></svg><div style="left:1130px;top:376px;width:13px;height:91px;border:1px solid #979797;border-radius:2px;background:linear-gradient(90deg,#f4f4f4 0,#e8e8e8 50%,#d9d9d9 51%,#cfcfcf 100%);box-shadow:inset 0 0 0 1px rgba(255,255,255,.6)"></div><div style="left:1134px;top:419px;width:6px;height:1px;background:#606060"></div><div style="left:1134px;top:421px;width:6px;height:1px;background:#606060"></div><div style="left:1134px;top:423px;width:6px;height:1px;background:#606060"></div><div style="left:1134px;top:425px;width:6px;height:1px;background:#606060"></div>
<div style="left:361px;top:601px;width:767px;height:16px;background:linear-gradient(#e3e3e3 0,#ededed 2px,#f0f0f0 60%,#f4f4f4 100%)"></div><svg style="position:absolute;left:368px;top:605px" width="6" height="9"><path d="M5 0.5 L1 4.5 L5 8.5Z" fill="#606060"/></svg><svg style="position:absolute;left:1116px;top:605px" width="6" height="9"><path d="M1 0.5 L5 4.5 L1 8.5Z" fill="#606060"/></svg><div style="left:380px;top:602px;width:696px;height:13px;border:1px solid #979797;border-radius:2px;background:linear-gradient(#f4f4f4 0,#e8e8e8 50%,#d9d9d9 51%,#cfcfcf 100%);box-shadow:inset 0 0 0 1px rgba(255,255,255,.6)"></div><div style="left:726px;top:606px;width:1px;height:6px;background:#606060"></div><div style="left:728px;top:606px;width:1px;height:6px;background:#606060"></div><div style="left:730px;top:606px;width:1px;height:6px;background:#606060"></div><div style="left:732px;top:606px;width:1px;height:6px;background:#606060"></div>
<div style="left:1128px;top:601px;width:17px;height:17px;background:#f0f0f0"></div>
<div style="left:597px;top:337px;width:260px;height:136px;border:1px solid #000;background:#fff"></div>
<div style="left:598px;top:338px;width:242px;height:17px;background:#3399ff"></div>
<div class="t" style="left:600px;top:339px;color:#fff">_resEncoding (variable)</div>
<div class="t" style="left:600px;top:356px;">_resIdentifier (variable)</div>
<div class="t" style="left:600px;top:373px;">_resMetaData (variable)</div>
<div class="t" style="left:600px;top:390px;">_resRawData (variable)</div>
<div class="t" style="left:600px;top:407px;">_resTxtData (variable)</div>
<div style="left:841px;top:338px;width:16px;height:122px;background:linear-gradient(90deg,#e3e3e3 0,#ededed 2px,#f0f0f0 60%,#f4f4f4 100%)"></div><svg style="position:absolute;left:845px;top:345px" width="9" height="6"><path d="M0.5 5 L4.5 1 L8.5 5Z" fill="#333"/></svg><svg style="position:absolute;left:845px;top:448px" width="9" height="6"><path d="M0.5 1 L4.5 5 L8.5 1Z" fill="#333"/></svg><div style="left:842px;top:355px;width:13px;height:85px;border:1px solid #979797;border-radius:2px;background:linear-gradient(90deg,#f4f4f4 0,#e8e8e8 50%,#d9d9d9 51%,#cfcfcf 100%);box-shadow:inset 0 0 0 1px rgba(255,255,255,.6)"></div><div style="left:846px;top:395px;width:6px;height:1px;background:#606060"></div><div style="left:846px;top:397px;width:6px;height:1px;background:#606060"></div><div style="left:846px;top:399px;width:6px;height:1px;background:#606060"></div><div style="left:846px;top:401px;width:6px;height:1px;background:#606060"></div>
<div style="left:841px;top:457px;width:16px;height:16px;background:#f0f0f0"></div>
<svg style="position:absolute;left:846px;top:462px" width="11" height="11"><path d="M10 2 L2 10 M10 6 L6 10" stroke="#aaa" stroke-width="1"/></svg>
<div style="left:356px;top:626px;width:797px;height:1px;background:#a0a0a0"></div>
<div style="left:356px;top:627px;width:794px;height:20px;background:#f0eded;border:1px solid #fff;border-left:0"></div>
<div style="left:465px;top:628px;width:1px;height:20px;background:#d8d4d4"></div>
<div style="left:616px;top:628px;width:1px;height:20px;background:#d8d4d4"></div>
<div class="t" style="left:358px;top:632px;">92 : 22 | 0</div>
<div class="t" style="left:470px;top:632px;">MODIFIED</div>
<div class="t" style="left:620px;top:632px;">C:\Dev\dproj\resource.d\src\item.d</div>
<div style="left:353px;top:651px;width:800px;height:1px;background:#a0a0a0"></div>
<svg style="position:absolute;left:739px;top:654px" width="29" height="2"><rect width="100%" height="2" fill="url(#gripp)"/></svg>
<svg style="position:absolute;left:355px;top:662px" width="365" height="5"><rect width="100%" height="5" fill="url(#dotp)"/></svg><svg style="position:absolute;left:776px;top:662px" width="364" height="5"><rect width="100%" height="5" fill="url(#dotp)"/></svg><div class="t" style="left:548px;width:400px;text-align:center;top:658px;">Messages</div><div class="cb" style="left:1141px;top:656px"><svg width="13" height="17" style="position:absolute;left:0;top:0"><path d="M2.6 4.6 L8.4 10.4 M8.4 4.6 L2.6 10.4" stroke="#3a4656" stroke-width="2.9" stroke-linecap="butt"/><path d="M3.1 5.1 L7.9 9.9 M7.9 5.1 L3.1 9.9" stroke="#fff" stroke-width="1.5" stroke-linecap="butt"/></svg></div>
<div style="left:355px;top:675px;width:796px;height:1px;background:#a0a0a0"></div>
<div class="btn" style="left:357px;top:678px;width:23px;height:20px;"><svg width="22" height="20" style="position:absolute;left:1px;top:0"><path d="M14.5 5.5 L17.5 2.5" stroke="#9a4a1a" stroke-width="2.6" stroke-linecap="round"/><path d="M1.5 8.8 C4 7 7 5.5 9.8 4.6 L14.6 10 C13 12 11 14 9 15.6 C7 13 4 10.5 1.5 8.8Z" fill="#d9b15a" stroke="#8a6020" stroke-width=".7"/><path d="M3.5 9 L9 13.5 M5.5 7.8 L10.5 12.2 M7.5 6.5 L12 10.8" stroke="#b08030" stroke-width=".6"/><path d="M10 4.5 L14.5 9.8" stroke="#8088a0" stroke-width="2.2" stroke-dasharray="1.2 .8"/><path d="M10.6 3.8 C11.6 3 12.8 2.8 13.6 3.6 L16 6.2 C16.4 7.4 15.8 8.6 15 9.2Z" fill="#e8c878" stroke="#9a7030" stroke-width=".6"/></svg></div>
<div style="left:385px;top:679px;width:1px;height:21px;background:#a0a0a0"></div>
<div style="left:388px;top:678px;width:98px;height:20px;border:1px solid #a8a8a8;border-radius:3px;background:linear-gradient(#f4f4f4 0,#eeeeee 50%,#e2e2e2 51%,#dcdcdc 100%)"></div><div class="t" style="left:238px;width:400px;text-align:center;top:682px;">All</div>
<div style="left:493px;top:678px;width:98px;height:20px;border:1px solid #a8a8a8;border-radius:3px;background:linear-gradient(#f4f4f4 0,#eeeeee 50%,#e2e2e2 51%,#dcdcdc 100%)"></div><div class="t" style="left:343px;width:400px;text-align:center;top:682px;">Editor</div>
<div style="left:490px;top:679px;width:1px;height:21px;background:#a0a0a0"></div>
<div style="left:598px;top:678px;width:98px;height:20px;border:1px solid #707070;border-radius:3px;background:linear-gradient(#e4e4e4 0,#dedede 50%,#d4d4d4 51%,#cccccc 100%)"></div><div class="t" style="left:448px;width:400px;text-align:center;top:682px;">Project</div>
<div style="left:595px;top:679px;width:1px;height:21px;background:#a0a0a0"></div>
<div style="left:703px;top:678px;width:98px;height:20px;border:1px solid #a8a8a8;border-radius:3px;background:linear-gradient(#f4f4f4 0,#eeeeee 50%,#e2e2e2 51%,#dcdcdc 100%)"></div><div class="t" style="left:553px;width:400px;text-align:center;top:682px;">Application</div>
<div style="left:700px;top:679px;width:1px;height:21px;background:#a0a0a0"></div>
<div style="left:808px;top:678px;width:98px;height:20px;border:1px solid #a8a8a8;border-radius:3px;background:linear-gradient(#f4f4f4 0,#eeeeee 50%,#e2e2e2 51%,#dcdcdc 100%)"></div><div class="t" style="left:658px;width:400px;text-align:center;top:682px;">Misc.</div>
<div style="left:805px;top:679px;width:1px;height:21px;background:#a0a0a0"></div>
<div style="left:355px;top:703px;width:795px;height:129px;border:1px solid #828790;background:#fff"></div>
<svg style="position:absolute;left:362px;top:707px" width="15" height="15"><defs><radialGradient id="ig362707" cx="45%" cy="35%" r="65%"><stop offset="0" stop-color="#cfe0f4"/><stop offset="1" stop-color="#4a78b8"/></radialGradient></defs><circle cx="7" cy="7" r="6.6" fill="url(#ig362707)" stroke="#3a5f98" stroke-width=".8"/><circle cx="7" cy="7" r="5.2" fill="none" stroke="#e8f0fa" stroke-width=".7" opacity=".8"/><rect x="6" y="6" width="2" height="4.5" fill="#fff"/><rect x="5" y="10" width="4" height="1.2" fill="#fff"/><rect x="6" y="3.2" width="2" height="1.8" fill="#fff"/></svg>
<svg style="position:absolute;left:362px;top:725px" width="15" height="15"><defs><radialGradient id="ig362725" cx="45%" cy="35%" r="65%"><stop offset="0" stop-color="#cfe0f4"/><stop offset="1" stop-color="#4a78b8"/></radialGradient></defs><circle cx="7" cy="7" r="6.6" fill="url(#ig362725)" stroke="#3a5f98" stroke-width=".8"/><circle cx="7" cy="7" r="5.2" fill="none" stroke="#e8f0fa" stroke-width=".7" opacity=".8"/><rect x="6" y="6" width="2" height="4.5" fill="#fff"/><rect x="5" y="10" width="4" height="1.2" fill="#fff"/><rect x="6" y="3.2" width="2" height="1.8" fill="#fff"/></svg>
<div class="code" style="left:381px;top:706px;font-size:11.667px;line-height:18px;-webkit-text-stroke:0.35px #000">compiling C:\...\build\resource.d.coedit</div>
<div class="code" style="left:381px;top:724px;font-size:11.667px;line-height:18px;-webkit-text-stroke:0.35px #000">C:\...\build\resource.d.coedit has been successfully compiled</div>
<div style="left:1134px;top:704px;width:16px;height:111px;background:linear-gradient(90deg,#e3e3e3 0,#ededed 2px,#f0f0f0 60%,#f4f4f4 100%)"></div><svg style="position:absolute;left:1138px;top:711px" width="9" height="6"><path d="M0.5 5 L4.5 1 L8.5 5Z" fill="#a0a0a0"/></svg><svg style="position:absolute;left:1138px;top:803px" width="9" height="6"><path d="M0.5 1 L4.5 5 L8.5 1Z" fill="#a0a0a0"/></svg>
<div style="left:356px;top:815px;width:778px;height:16px;background:linear-gradient(#e3e3e3 0,#ededed 2px,#f0f0f0 60%,#f4f4f4 100%)"></div><svg style="position:absolute;left:363px;top:819px" width="6" height="9"><path d="M5 0.5 L1 4.5 L5 8.5Z" fill="#a0a0a0"/></svg><svg style="position:absolute;left:1122px;top:819px" width="6" height="9"><path d="M1 0.5 L5 4.5 L1 8.5Z" fill="#a0a0a0"/></svg>
<div style="left:1134px;top:815px;width:16px;height:17px;background:#f0f0f0"></div>
<svg style="position:absolute;left:739px;top:838px" width="29" height="2"><rect width="100%" height="2" fill="url(#gripp)"/></svg>
<svg style="position:absolute;left:355px;top:846px" width="353" height="5"><rect width="100%" height="5" fill="url(#dotp)"/></svg><svg style="position:absolute;left:788px;top:846px" width="352" height="5"><rect width="100%" height="5" fill="url(#dotp)"/></svg><div class="t" style="left:548px;width:400px;text-align:center;top:842px;">Process input</div><div class="cb" style="left:1141px;top:840px"><svg width="13" height="17" style="position:absolute;left:0;top:0"><path d="M2.6 4.6 L8.4 10.4 M8.4 4.6 L2.6 10.4" stroke="#3a4656" stroke-width="2.9" stroke-linecap="butt"/><path d="M3.1 5.1 L7.9 9.9 M7.9 5.1 L3.1 9.9" stroke="#fff" stroke-width="1.5" stroke-linecap="butt"/></svg></div>
<div style="left:357px;top:861px;width:791px;height:20px;background:#eeeeee;border-top:1px solid #a0a0a0;border-left:1px solid #a0a0a0;border-bottom:1px solid #fff;border-right:1px solid #fff;width:790px"></div>
<div class="t" style="left:359px;top:864px;">no process</div>
<div class="edit" style="left:357px;top:887px;width:712px;height:21px;"></div>
<div class="btn" style="left:1076px;top:888px;width:71px;height:20px;"></div>
<div class="t" style="left:912px;width:400px;text-align:center;top:892px;">Send</div>
<svg style="position:absolute;left:1160px;top:58px" width="136" height="5"><rect width="100%" height="5" fill="url(#dotp)"/></svg><svg style="position:absolute;left:1390px;top:58px" width="134" height="5"><rect width="100%" height="5" fill="url(#dotp)"/></svg><div class="t" style="left:1143px;width:400px;text-align:center;top:54px;">Project inspector</div><div class="cb" style="left:1525px;top:52px"><svg width="13" height="17" style="position:absolute;left:0;top:0"><path d="M2.6 4.6 L8.4 10.4 M8.4 4.6 L2.6 10.4" stroke="#3a4656" stroke-width="2.9" stroke-linecap="butt"/><path d="M3.1 5.1 L7.9 9.9 M7.9 5.1 L3.1 9.9" stroke="#fff" stroke-width="1.5" stroke-linecap="butt"/></svg></div>
<div class="btn" style="left:1161px;top:72px;width:24px;height:20px;"><svg style="position:absolute;left:4px;top:2px" width="17" height="17"><path d="M2.5 1.5 h7 l4 4 v10 h-11Z" fill="#fff" stroke="#a8a8a8"/><path d="M9.5 1.5 v4 h4" fill="#eee" stroke="#a8a8a8"/><circle cx="12" cy="13" r="3.5" fill="#4caf1c" stroke="#fff" stroke-width=".5"/><path d="M10 13 h4 M12 11 v4" stroke="#fff" stroke-width="1.3"/></svg></div>
<div class="btn" style="left:1189px;top:72px;width:24px;height:20px;"><svg style="position:absolute;left:4px;top:2px" width="17" height="17"><path d="M2.5 1.5 h7 l4 4 v10 h-11Z" fill="#fff" stroke="#a8a8a8"/><path d="M9.5 1.5 v4 h4" fill="#eee" stroke="#a8a8a8"/><circle cx="12" cy="13" r="3.5" fill="#f06a2a" stroke="#fff" stroke-width=".5"/><path d="M10 13 h4" stroke="#fff" stroke-width="1.4"/></svg></div>
<div class="btn" style="left:1217px;top:72px;width:24px;height:20px;"><svg style="position:absolute;left:3px;top:2px" width="18" height="17"><path d="M1.5 3.5 h5 l1.5 1.5 h7 v9 h-13.5Z" fill="#f0c860" stroke="#c89a30"/><path d="M1.5 14.5 l2.5 -7 h13 l-2.5 7Z" fill="#fbe39a" stroke="#c89a30"/><circle cx="13" cy="13" r="3.5" fill="#4caf1c" stroke="#fff" stroke-width=".5"/><path d="M11 13 h4 M13 11 v4" stroke="#fff" stroke-width="1.3"/></svg></div>
<div class="btn" style="left:1245px;top:72px;width:24px;height:20px;"><svg style="position:absolute;left:3px;top:2px" width="18" height="17"><path d="M1.5 3.5 h5 l1.5 1.5 h7 v9 h-13.5Z" fill="#f0c860" stroke="#c89a30"/><path d="M1.5 14.5 l2.5 -7 h13 l-2.5 7Z" fill="#fbe39a" stroke="#c89a30"/><circle cx="13" cy="13" r="3.5" fill="#e8443a" stroke="#fff" stroke-width=".5"/><path d="M11 13 h4" stroke="#fff" stroke-width="1.4"/></svg></div>
<div class="edit" style="left:1272px;top:71px;width:228px;height:21px;"></div>
<div class="btn" style="left:1505px;top:72px;width:24px;height:19px;border-color:#aab2ba;background:linear-gradient(#fbfbfb,#f0f0f0)"><svg width="24" height="19" style="position:absolute;left:0;top:0"><path d="M4 3.5 L19.5 3.5 L19.5 5 L12.8 10.5 L12.8 15.5 L10.2 15.5 L10.2 10.5 L4 5Z" fill="url(#fung)" stroke="#a8a8a8" stroke-width=".8"/><path d="M14 11 L19.5 16.5 M19.5 11 L14 16.5" stroke="#333" stroke-width="2.4"/><path d="M14 11 L19.5 16.5 M19.5 11 L14 16.5" stroke="#777" stroke-width=".6" stroke-dasharray="1 1"/></svg></div>
<div class="wbox" style="left:1160px;top:97px;width:374px;height:265px;"></div>
<svg style="position:absolute;left:1166px;top:100px" width="17" height="17"><path d="M1.5 1.5 h7 l2 2 v9 h-9Z" fill="#fff" stroke="#b0b0b0"/><path d="M4.5 3.5 h7 l2 2 v9 h-9Z" fill="#fff" stroke="#b0b0b0"/><path d="M7.5 5.5 h5 l3 3 v7 h-8Z" fill="#fff" stroke="#a0a0a0"/></svg>
<div class="t" style="left:1186px;top:101px;">Source files</div>
<div style="left:1172px;top:117px;width:0;height:81px;border-left:1px dotted #909090"></div>
<div style="left:1173px;top:125px;width:6px;height:0;border-top:1px dotted #909090"></div>
<svg style="position:absolute;left:1181px;top:118px" width="16" height="17"><path d="M1.5 1.5 h9 l3 3 v11 h-12Z" fill="#fff" stroke="#b0b0b0"/><path d="M4 6.5 h7" stroke="#b8b8b8"/><path d="M4 8.5 h7" stroke="#b8b8b8"/><path d="M4 10.5 h7" stroke="#b8b8b8"/><path d="M4 12.5 h7" stroke="#b8b8b8"/><path d="M4 14.5 h7" stroke="#b8b8b8"/></svg>
<div class="t" style="left:1201px;top:119px;">..\src\resource.d</div>
<div style="left:1173px;top:143px;width:6px;height:0;border-top:1px dotted #909090"></div>
<svg style="position:absolute;left:1181px;top:136px" width="16" height="17"><path d="M1.5 1.5 h9 l3 3 v11 h-12Z" fill="#fff" stroke="#b0b0b0"/><path d="M4 6.5 h7" stroke="#b8b8b8"/><path d="M4 8.5 h7" stroke="#b8b8b8"/><path d="M4 10.5 h7" stroke="#b8b8b8"/><path d="M4 12.5 h7" stroke="#b8b8b8"/><path d="M4 14.5 h7" stroke="#b8b8b8"/></svg>
<div class="t" style="left:1201px;top:137px;">..\src\item.d</div>
<div style="left:1173px;top:161px;width:6px;height:0;border-top:1px dotted #909090"></div>
<svg style="position:absolute;left:1181px;top:154px" width="16" height="17"><path d="M1.5 1.5 h9 l3 3 v11 h-12Z" fill="#fff" stroke="#b0b0b0"/><path d="M4 6.5 h7" stroke="#b8b8b8"/><path d="M4 8.5 h7" stroke="#b8b8b8"/><path d="M4 10.5 h7" stroke="#b8b8b8"/><path d="M4 12.5 h7" stroke="#b8b8b8"/><path d="M4 14.5 h7" stroke="#b8b8b8"/></svg>
<div class="t" style="left:1201px;top:155px;">..\src\utils.d</div>
<div style="left:1173px;top:179px;width:6px;height:0;border-top:1px dotted #909090"></div>
<svg style="position:absolute;left:1181px;top:172px" width="16" height="17"><path d="M1.5 1.5 h9 l3 3 v11 h-12Z" fill="#fff" stroke="#b0b0b0"/><path d="M4 6.5 h7" stroke="#b8b8b8"/><path d="M4 8.5 h7" stroke="#b8b8b8"/><path d="M4 10.5 h7" stroke="#b8b8b8"/><path d="M4 12.5 h7" stroke="#b8b8b8"/><path d="M4 14.5 h7" stroke="#b8b8b8"/></svg>
<div class="t" style="left:1201px;top:173px;">..\src\e7F.d</div>
<div style="left:1173px;top:197px;width:6px;height:0;border-top:1px dotted #909090"></div>
<svg style="position:absolute;left:1181px;top:190px" width="16" height="17"><path d="M1.5 1.5 h9 l3 3 v11 h-12Z" fill="#fff" stroke="#b0b0b0"/><path d="M4 6.5 h7" stroke="#b8b8b8"/><path d="M4 8.5 h7" stroke="#b8b8b8"/><path d="M4 10.5 h7" stroke="#b8b8b8"/><path d="M4 12.5 h7" stroke="#b8b8b8"/><path d="M4 14.5 h7" stroke="#b8b8b8"/></svg>
<div class="t" style="left:1201px;top:191px;">..\src\z85.d</div>
<svg style="position:absolute;left:1165px;top:208px" width="18" height="17"><path d="M2.5 15 L10 7.5" stroke="#3a6ab8" stroke-width="4.2" stroke-linecap="round"/><path d="M2.5 15 L10 7.5" stroke="#8ab4ea" stroke-width="2" stroke-linecap="round"/><path d="M9 8.5 C7.5 5 10 1.5 13.5 2 L11.5 4.5 L13 6 L15.5 4 C16.2 7.5 13 10 9.8 9Z" fill="#b8bcc4" stroke="#6a7080" stroke-width=".7"/></svg>
<div class="t" style="left:1186px;top:209px;">Configurations</div>
<div style="left:1172px;top:225px;width:0;height:46px;border-left:1px dotted #909090"></div>
<div style="left:1173px;top:234px;width:6px;height:0;border-top:1px dotted #909090"></div>
<svg style="position:absolute;left:1187px;top:231px" width="11" height="11"><circle cx="5.5" cy="5.5" r="4.2" fill="none" stroke="#8c8c8c" stroke-width="2.2" stroke-dasharray="1.6 1.1"/><circle cx="5.5" cy="5.5" r="3.1" fill="#a4a4a4"/><circle cx="5.5" cy="5.5" r="1.2" fill="#e0e0e0"/></svg>
<div class="t" style="left:1201px;top:227px;">debug</div>
<div style="left:1173px;top:252px;width:6px;height:0;border-top:1px dotted #909090"></div>
<svg style="position:absolute;left:1187px;top:249px" width="11" height="11"><circle cx="5.5" cy="5.5" r="4.2" fill="none" stroke="#8c8c8c" stroke-width="2.2" stroke-dasharray="1.6 1.1"/><circle cx="5.5" cy="5.5" r="3.1" fill="#a4a4a4"/><circle cx="5.5" cy="5.5" r="1.2" fill="#e0e0e0"/></svg>
<div class="t" style="left:1201px;top:245px;">release</div>
<div style="left:1173px;top:270px;width:6px;height:0;border-top:1px dotted #909090"></div>
<svg style="position:absolute;left:1187px;top:267px" width="11" height="11"><circle cx="5.5" cy="5.5" r="4.2" fill="none" stroke="#8c8c8c" stroke-width="2.2" stroke-dasharray="1.6 1.1"/><circle cx="5.5" cy="5.5" r="3.1" fill="#a4a4a4"/><circle cx="5.5" cy="5.5" r="1.2" fill="#e0e0e0"/></svg>
<div class="t" style="left:1201px;top:263px;">debug-redirected (active)</div>
<div style="left:1183px;top:279px;width:46px;height:16px;border:1px solid #dadada;border-radius:2px;background:#f2f2f2"></div>
<svg style="position:absolute;left:1165px;top:279px" width="18" height="17"><path d="M1.5 3.5 h5 l1.5 1.5 h7 v9 h-13.5Z" fill="#f0c860" stroke="#c89a30"/><path d="M1.5 14.5 l2.5 -7 h13 l-2.5 7Z" fill="#fbe39a" stroke="#c89a30"/><path d="M7 10.5 h4 v-2.5 l5 4.5 l-5 4.5 v-2.5 h-4Z" fill="#5cb82c" stroke="#3a8a18" stroke-width=".7"/></svg>
<div class="t" style="left:1186px;top:281px;">Imports</div>
<div style="left:1172px;top:297px;width:0;height:10px;border-left:1px dotted #909090"></div>
<div style="left:1173px;top:306px;width:6px;height:0;border-top:1px dotted #909090"></div>
<svg style="position:absolute;left:1180px;top:298px" width="18" height="17"><path d="M1.5 3.5 h5 l1.5 1.5 h7 v9 h-13.5Z" fill="#f0c860" stroke="#c89a30"/><path d="M1.5 14.5 l2.5 -7 h13 l-2.5 7Z" fill="#fbe39a" stroke="#c89a30"/></svg>
<div class="t" style="left:1201px;top:299px;">C:\Dev\dproj\resource.d\build\..\src\</div>
<svg style="position:absolute;left:1165px;top:315px" width="18" height="17"><path d="M1.5 3.5 h5 l1.5 1.5 h7 v9 h-13.5Z" fill="#f0c860" stroke="#c89a30"/><path d="M1.5 14.5 l2.5 -7 h13 l-2.5 7Z" fill="#fbe39a" stroke="#c89a30"/><path d="M7 10.5 h4 v-2.5 l5 4.5 l-5 4.5 v-2.5 h-4Z" fill="#5cb82c" stroke="#3a8a18" stroke-width=".7"/></svg>
<div class="t" style="left:1186px;top:317px;">Includes</div>
<svg style="position:absolute;left:1166px;top:334px" width="17" height="17"><path d="M1.5 1.5 h7 l2 2 v9 h-9Z" fill="#fff" stroke="#b0b0b0"/><path d="M4.5 3.5 h7 l2 2 v9 h-9Z" fill="#fff" stroke="#b0b0b0"/><path d="M7.5 5.5 h5 l3 3 v7 h-8Z" fill="#fff" stroke="#a0a0a0"/></svg>
<div class="t" style="left:1186px;top:335px;">Extra sources</div>
<svg style="position:absolute;left:1333px;top:368px" width="29" height="2"><rect width="100%" height="2" fill="url(#gripp)"/></svg>
<svg style="position:absolute;left:1160px;top:376px" width="137" height="5"><rect width="100%" height="5" fill="url(#dotp)"/></svg><svg style="position:absolute;left:1389px;top:376px" width="135" height="5"><rect width="100%" height="5" fill="url(#dotp)"/></svg><div class="t" style="left:1143px;width:400px;text-align:center;top:372px;">Library manager</div><div class="cb" style="left:1525px;top:370px"><svg width="13" height="17" style="position:absolute;left:0;top:0"><path d="M2.6 4.6 L8.4 10.4 M8.4 4.6 L2.6 10.4" stroke="#3a4656" stroke-width="2.9" stroke-linecap="butt"/><path d="M3.1 5.1 L7.9 9.9 M7.9 5.1 L3.1 9.9" stroke="#fff" stroke-width="1.5" stroke-linecap="butt"/></svg></div>
<div class="btn" style="left:1163px;top:392px;width:24px;height:20px;"><svg width="22" height="20" style="position:absolute;left:1px;top:0"><rect x="5.5" y="3.5" width="10" height="13" fill="#4a90d8" stroke="#2a68b0"/><rect x="5" y="3" width="2" height="14" fill="#2a68b0"/><rect x="9" y="6" width="5" height="1.5" fill="#fff"/><rect x="9" y="9" width="5" height="1.5" fill="#fff"/><circle cx="16" cy="14" r="3.6" fill="#4caf1c" stroke="#fff" stroke-width=".5"/><path d="M14 14 h4 M16 12 v4" stroke="#fff" stroke-width="1.3"/></svg></div>
<div class="btn" style="left:1191px;top:392px;width:24px;height:20px;"><svg width="22" height="20" style="position:absolute;left:1px;top:0"><rect x="5.5" y="3.5" width="10" height="13" fill="#4a90d8" stroke="#2a68b0"/><rect x="5" y="3" width="2" height="14" fill="#2a68b0"/><rect x="9" y="6" width="5" height="1.5" fill="#fff"/><rect x="9" y="9" width="5" height="1.5" fill="#fff"/><circle cx="16" cy="14" r="3.6" fill="#e8443a" stroke="#fff" stroke-width=".5"/><path d="M14 14 h4" stroke="#fff" stroke-width="1.4"/></svg></div>
<div class="btn" style="left:1219px;top:392px;width:24px;height:20px;"><svg width="22" height="20" style="position:absolute;left:1px;top:0"><path d="M8.5 3 h5 v7 h3.5 L11 16.5 L5 10 h3.5Z" fill="#3a98e6" stroke="#1f6fc0" stroke-width=".8"/></svg></div>
<div class="btn" style="left:1247px;top:392px;width:24px;height:20px;"><svg width="22" height="20" style="position:absolute;left:1px;top:0"><path d="M8.5 17 h5 v-7 h3.5 L11 3.5 L5 10 h3.5Z" fill="#5ab0f0" stroke="#1f6fc0" stroke-width=".8"/></svg></div>
<div class="btn" style="left:1451px;top:392px;width:24px;height:20px;"><svg width="22" height="20" style="position:absolute;left:1px;top:0"><rect x="4.5" y="3.5" width="12" height="14" fill="#3a78c8" stroke="#24508a"/><rect x="6" y="5" width="9" height="11" fill="#6aa0e0"/><path d="M8 15 L17 6 L19 8 L10 17 L7.5 17.5Z" fill="#f0c050" stroke="#a07020" stroke-width=".6"/></svg></div>
<div class="btn" style="left:1479px;top:392px;width:24px;height:20px;"><svg style="position:absolute;left:3px;top:2px" width="18" height="17"><path d="M1.5 3.5 h5 l1.5 1.5 h7 v9 h-13.5Z" fill="#f0c860" stroke="#c89a30"/><path d="M1.5 14.5 l2.5 -7 h13 l-2.5 7Z" fill="#fbe39a" stroke="#c89a30"/><path d="M8 9 l4 -2 l4 2 v4 l-4 2 l-4 -2Z" fill="#9cc8f0" stroke="#4a88c8" stroke-width=".7"/></svg></div>
<div class="btn" style="left:1507px;top:392px;width:24px;height:20px;"><svg style="position:absolute;left:3px;top:2px" width="18" height="17"><path d="M1.5 3.5 h5 l1.5 1.5 h7 v9 h-13.5Z" fill="#f0c860" stroke="#c89a30"/><path d="M1.5 14.5 l2.5 -7 h13 l-2.5 7Z" fill="#fbe39a" stroke="#c89a30"/><circle cx="13" cy="13" r="3.5" fill="#4caf1c" stroke="#fff" stroke-width=".5"/><path d="M11 13 h4 M13 11 v4" stroke="#fff" stroke-width="1.3"/></svg></div>
<div class="wbox" style="left:1162px;top:419px;width:370px;height:164px;"></div>
<div style="left:1163px;top:420px;width:370px;height:23px;background:linear-gradient(#fff 0,#fff 40%,#f3f4f6 41%,#f1f2f4 100%);border-bottom:1px solid #d5d5d5;height:22px"></div>
<div style="left:1263px;top:421px;width:1px;height:22px;background:#e2e3e5"></div>
<div style="left:1463px;top:421px;width:1px;height:22px;background:#e2e3e5"></div>
<div class="t" style="left:1170px;top:426px;">Alias</div>
<div class="t" style="left:1270px;top:426px;">Library file</div>
<div class="t" style="left:1470px;top:426px;">Sources ...</div>
<div style="left:1264px;top:444px;width:1px;height:139px;background:#f0f0f0"></div>
<div style="left:1464px;top:444px;width:1px;height:139px;background:#f0f0f0"></div>
<div class="t" style="left:1170px;top:448px;">phobos</div>
<div class="t" style="left:1270px;top:448px;">C:\Dev\dmd2\windows\lib\phob...</div>
<div class="t" style="left:1470px;top:448px;">C:\Dev\...</div>
<div class="t" style="left:1170px;top:467px;">bitsets</div>
<div class="t" style="left:1270px;top:467px;">C:\Dev\dproj\bitSet\lib\bitsets.lib</div>
<div class="t" style="left:1470px;top:467px;">C:\Dev\...</div>
<div class="t" style="left:1170px;top:486px;">iz</div>
<div class="t" style="left:1270px;top:486px;">C:\Dev\dproj\iz\lib\iz.lib</div>
<div class="t" style="left:1470px;top:486px;">C:\Dev\...</div>
<div class="t" style="left:1170px;top:505px;">libdparse</div>
<div class="t" style="left:1270px;top:505px;">C:\Dev\dlibs\libdparse.lib</div>
<div class="t" style="left:1470px;top:505px;">C:\Dev\r...</div>
<div class="t" style="left:1170px;top:524px;">temple</div>
<div class="t" style="left:1270px;top:524px;">C:\Dev\dlibs\temple.lib</div>
<div class="t" style="left:1470px;top:524px;">C:\Dev\r...</div>
<div style="left:1163px;top:463px;width:370px;height:1px;background:#f0f0f0"></div>
<div style="left:1163px;top:482px;width:370px;height:1px;background:#f0f0f0"></div>
<div style="left:1163px;top:501px;width:370px;height:1px;background:#f0f0f0"></div>
<div style="left:1163px;top:520px;width:370px;height:1px;background:#f0f0f0"></div>
<div style="left:1163px;top:539px;width:370px;height:1px;background:#f0f0f0"></div>
<div style="left:1163px;top:558px;width:370px;height:1px;background:#f0f0f0"></div>
<div style="left:1163px;top:577px;width:370px;height:1px;background:#f0f0f0"></div>
<svg style="position:absolute;left:1333px;top:591px" width="29" height="2"><rect width="100%" height="2" fill="url(#gripp)"/></svg>
<svg style="position:absolute;left:1160px;top:599px" width="125" height="5"><rect width="100%" height="5" fill="url(#dotp)"/></svg><svg style="position:absolute;left:1401px;top:599px" width="123" height="5"><rect width="100%" height="5" fill="url(#dotp)"/></svg><div class="t" style="left:1143px;width:400px;text-align:center;top:595px;">Project configuration</div><div class="cb" style="left:1525px;top:593px"><svg width="13" height="17" style="position:absolute;left:0;top:0"><path d="M2.6 4.6 L8.4 10.4 M8.4 4.6 L2.6 10.4" stroke="#3a4656" stroke-width="2.9" stroke-linecap="butt"/><path d="M3.1 5.1 L7.9 9.9 M7.9 5.1 L3.1 9.9" stroke="#fff" stroke-width="1.5" stroke-linecap="butt"/></svg></div>
<div style="left:1162px;top:614px;width:279px;height:20px;border:1px solid #707070;border-radius:3px;background:linear-gradient(#f2f2f2 0,#ebebeb 50%,#dddddd 51%,#cfcfcf 100%)"></div>
<div class="t" style="left:1167px;top:618px;">debug-redirected</div>
<svg style="position:absolute;left:1430px;top:622px" width="9" height="5"><path d="M0 0 L8 0 L4 4Z" fill="#000"/></svg>
<div class="btn" style="left:1445px;top:614px;width:26px;height:20px;"><svg width="26" height="20" style="position:absolute;left:1px;top:0"><circle cx="11" cy="10" r="6" fill="none" stroke="#a0a0a0" stroke-width="3" stroke-dasharray="2.2 1.6"/><circle cx="11" cy="10" r="4.5" fill="#c8c8c8" stroke="#909090" stroke-width=".6"/><circle cx="11" cy="10" r="1.8" fill="#f0f0f0"/><circle cx="15" cy="14" r="3.6" fill="#4caf1c" stroke="#fff" stroke-width=".5"/><path d="M13 14 h4 M15 12 v4" stroke="#fff" stroke-width="1.3"/></svg></div>
<div class="btn" style="left:1475px;top:614px;width:26px;height:20px;"><svg width="26" height="20" style="position:absolute;left:1px;top:0"><circle cx="11" cy="10" r="6" fill="none" stroke="#a0a0a0" stroke-width="3" stroke-dasharray="2.2 1.6"/><circle cx="11" cy="10" r="4.5" fill="#c8c8c8" stroke="#909090" stroke-width=".6"/><circle cx="11" cy="10" r="1.8" fill="#f0f0f0"/><circle cx="15" cy="14" r="3.6" fill="#e8443a" stroke="#fff" stroke-width=".5"/><path d="M13 14 h4" stroke="#fff" stroke-width="1.4"/></svg></div>
<div class="btn" style="left:1505px;top:614px;width:26px;height:20px;"><svg width="26" height="20" style="position:absolute;left:1px;top:0"><circle cx="11" cy="10" r="6" fill="none" stroke="#a0a0a0" stroke-width="3" stroke-dasharray="2.2 1.6"/><circle cx="11" cy="10" r="4.5" fill="#c8c8c8" stroke="#909090" stroke-width=".6"/><circle cx="11" cy="10" r="1.8" fill="#f0f0f0"/><path d="M10 11.5 h4 v-2.5 l5 4.5 l-5 4.5 v-2.5 h-4Z" fill="#5cb82c" stroke="#3a8a18" stroke-width=".7"/></svg></div>
<div class="wbox" style="left:1162px;top:640px;width:150px;height:269px;"></div>
<div class="t" style="left:1170px;top:644px;">General</div>
<div class="t" style="left:1170px;top:662px;">Categories</div>
<div style="left:1174px;top:679px;width:0;height:152px;border-left:1px dotted #909090"></div>
<div style="left:1182px;top:769px;width:35px;height:16px;border:1px solid #dadada;border-radius:2px;background:#f2f2f2"></div>
<div style="left:1175px;top:687px;width:6px;height:0;border-top:1px dotted #909090"></div>
<div class="t" style="left:1185px;top:680px;">Messages</div>
<div style="left:1175px;top:705px;width:6px;height:0;border-top:1px dotted #909090"></div>
<div class="t" style="left:1185px;top:698px;">Debugging</div>
<div style="left:1175px;top:723px;width:6px;height:0;border-top:1px dotted #909090"></div>
<div class="t" style="left:1185px;top:716px;">Documentation</div>
<div style="left:1175px;top:741px;width:6px;height:0;border-top:1px dotted #909090"></div>
<div class="t" style="left:1185px;top:734px;">Output</div>
<div style="left:1175px;top:759px;width:6px;height:0;border-top:1px dotted #909090"></div>
<div class="t" style="left:1185px;top:752px;">Others</div>
<div style="left:1175px;top:777px;width:6px;height:0;border-top:1px dotted #909090"></div>
<div class="t" style="left:1185px;top:770px;">Paths</div>
<div style="left:1175px;top:795px;width:6px;height:0;border-top:1px dotted #909090"></div>
<div class="t" style="left:1185px;top:788px;">Pre-build process</div>
<div style="left:1175px;top:813px;width:6px;height:0;border-top:1px dotted #909090"></div>
<div class="t" style="left:1185px;top:806px;">Post-build process</div>
<div style="left:1175px;top:831px;width:6px;height:0;border-top:1px dotted #909090"></div>
<div class="t" style="left:1185px;top:824px;">Run options</div>
<div class="t" style="left:1170px;top:842px;">All categories</div>
<div style="left:1319px;top:640px;width:213px;height:269px;background:#f0f0f0;border:1px solid #828790;box-shadow:inset 0 0 0 1px #fff"></div><div style="left:1342px;top:642px;width:1px;height:267px;background:#a0a0a0"></div><div style="left:1343px;top:642px;width:121px;height:25px;overflow:hidden"><div class="t" style="left:2px;top:5px">extraSources</div></div><div style="left:1465px;top:642px;width:51px;height:25px;overflow:hidden"><div class="t" style="left:4px;top:5px">(TStringList)</div></div><div style="left:1344px;top:666px;width:171px;height:1px;border-top:1px dotted #a0a0a0;height:0"></div><div style="left:1343px;top:667px;width:121px;height:25px;overflow:hidden"><div class="t" style="left:2px;top:5px">imports</div></div><div style="left:1465px;top:667px;width:51px;height:25px;overflow:hidden"><div class="t" style="left:4px;top:5px">(TStringList)</div></div><div style="left:1344px;top:691px;width:171px;height:1px;border-top:1px dotted #a0a0a0;height:0"></div><div style="left:1343px;top:692px;width:121px;height:25px;overflow:hidden"><div class="t" style="left:2px;top:5px">includes</div></div><div style="left:1465px;top:692px;width:51px;height:25px;overflow:hidden"><div class="t" style="left:4px;top:5px">(TStringList)</div></div><div style="left:1344px;top:716px;width:171px;height:1px;border-top:1px dotted #a0a0a0;height:0"></div><div style="left:1343px;top:717px;width:121px;height:25px;overflow:hidden"><div class="t" style="left:2px;top:5px">objectDirectory</div></div><div style="left:1465px;top:717px;width:51px;height:25px;overflow:hidden"><div class="t" style="left:4px;top:5px"></div></div><div style="left:1344px;top:741px;width:171px;height:1px;border-top:1px dotted #a0a0a0;height:0"></div><div style="left:1343px;top:742px;width:121px;height:25px;overflow:hidden"><div class="t" style="left:2px;top:5px">outputFilename</div></div><div style="left:1465px;top:742px;width:51px;height:25px;overflow:hidden"><div class="t" style="left:4px;top:5px">&lt;CPP&gt;..\\</div></div><div style="left:1344px;top:766px;width:171px;height:1px;border-top:1px dotted #a0a0a0;height:0"></div><div style="left:1464px;top:642px;width:1px;height:125px;background:#a0a0a0"></div><div style="left:1516px;top:642px;width:16px;height:267px;background:linear-gradient(90deg,#e3e3e3 0,#ececec 2px,#f0f0f0 60%,#f4f4f4 100%)"></div><svg style="position:absolute;left:1520px;top:647px" width="9" height="6"><path d="M0.5 5 L4.5 1 L8.5 5Z" fill="#a0a0a0"/></svg><svg style="position:absolute;left:1520px;top:897px" width="9" height="6"><path d="M0.5 1 L4.5 5 L8.5 1Z" fill="#a0a0a0"/></svg>
</body></html>
